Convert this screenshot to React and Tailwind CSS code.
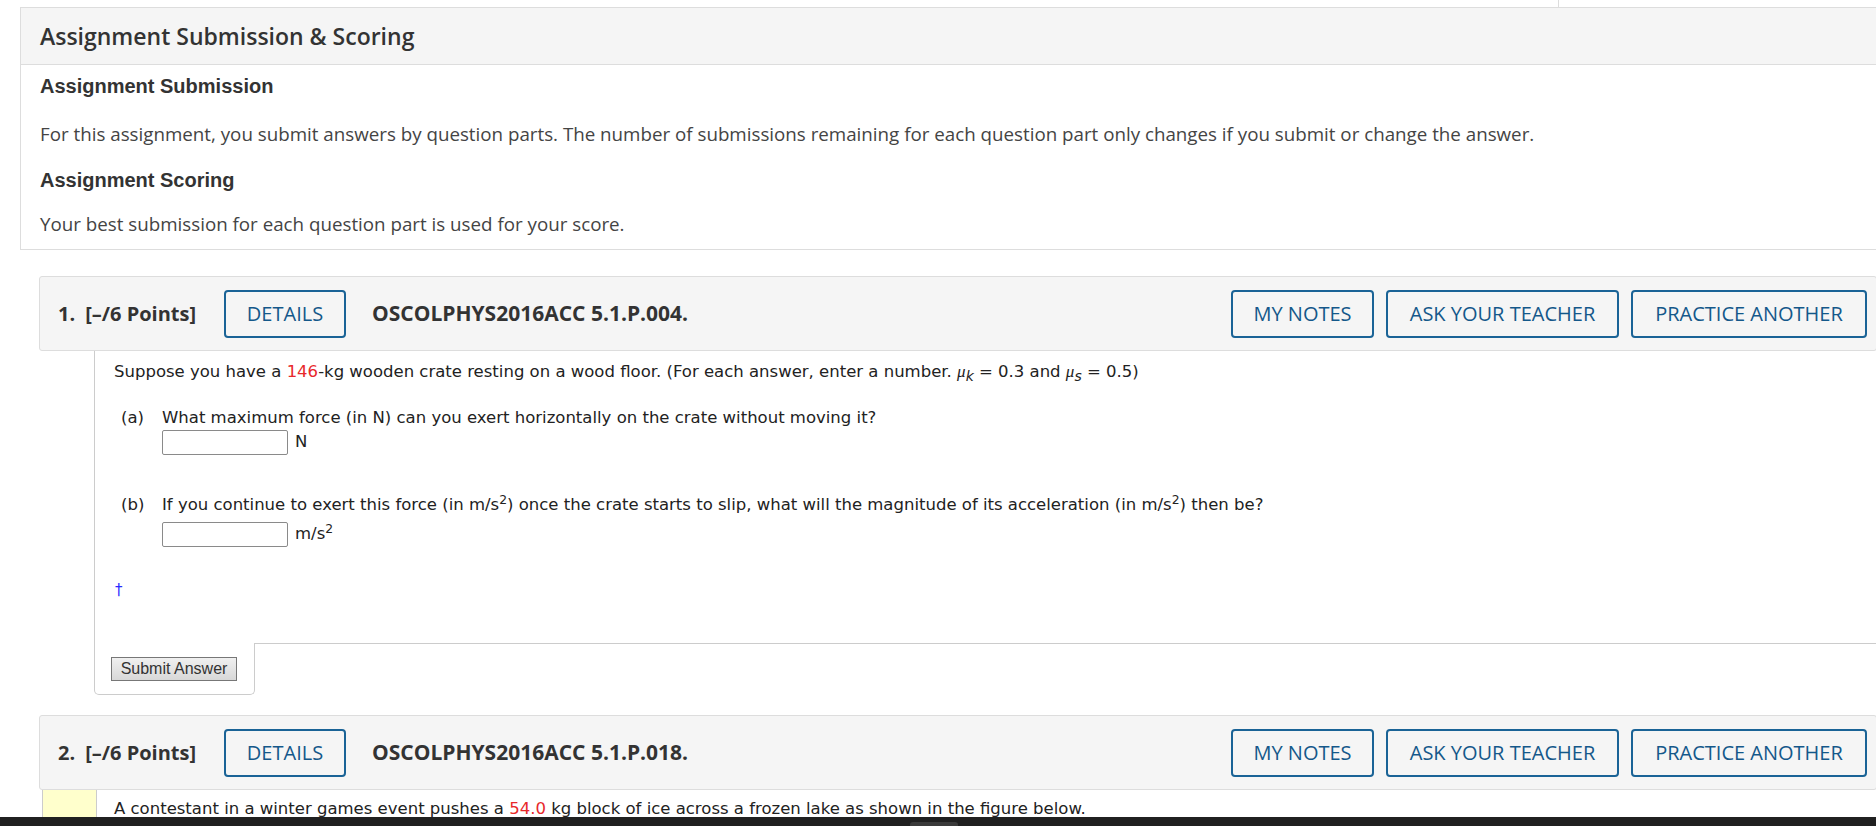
import React from "react";

const blueBtn =
  "h-[48px] flex items-center justify-center rounded-[4px] border-2 border-[#1a6396] text-[#14588a] text-[20px] uppercase bg-[#f5f5f5]";

function QuestionHeader({ num, code }) {
  return (
    <div className="ml-[39px] w-[1838px] h-[75px] border border-[#ddd] rounded-[3px] bg-[#f5f5f5] flex items-center pl-[18px] pr-[9px]">
      <span className="w-[166px] font-bold text-[20px] text-[#333] whitespace-nowrap">
        {num}.<span className="ml-[10px]">[–/6 Points]</span>
      </span>
      <button className={`${blueBtn} w-[122px]`}>Details</button>
      <span className="ml-[26px] font-bold text-[21px] text-[#333] whitespace-nowrap">{code}</span>
      <div className="flex-1" />
      <div className="flex gap-[12px]">
        <button className={`${blueBtn} w-[143px]`}>My Notes</button>
        <button className={`${blueBtn} w-[233px]`}>Ask Your Teacher</button>
        <button className={`${blueBtn} w-[236px]`}>Practice Another</button>
      </div>
    </div>
  );
}

function Mu({ sub }) {
  return (
    <span className="whitespace-nowrap">
      <i className="font-['Liberation_Serif',serif] text-[17px]">μ</i>
      <sub className="italic text-[14px]">{sub}</sub>
    </span>
  );
}

function AnswerBox({ unit }) {
  return (
    <div className="flex items-center pl-[67px]">
      <input
        type="text"
        className="w-[126px] h-[25px] border border-[#8a8a8a] rounded-[2px] bg-white"
      />
      <span className="ml-[7px]">{unit}</span>
    </div>
  );
}

export default function App() {
  return (
    <div className="h-[826px] w-[1876px] overflow-hidden bg-white flex flex-col font-['Open_Sans',sans-serif] text-[#333]">
      <div className="flex-1 overflow-hidden">
        {/* bottom edge of the panel above */}
        <div className="h-[7px] flex">
          <div className="w-[1559px] border-r border-[#ddd]" />
        </div>

        {/* Assignment Submission & Scoring */}
        <section className="ml-[20px] w-[1870px] border border-[#ddd]">
          <div className="h-[57px] bg-[#f5f5f5] border-b border-[#ddd] flex items-center pl-[19px]">
            <h1 className="text-[23px] font-semibold text-[#333]">Assignment Submission &amp; Scoring</h1>
          </div>
          <div className="h-[184px] pl-[19px] pt-[9px]">
            <h2 className="h-[24px] leading-[24px] font-['Liberation_Sans',sans-serif] font-bold text-[20px] text-[#333]">
              Assignment Submission
            </h2>
            <p className="mt-[22px] h-[28px] leading-[28px] text-[18.75px] text-[#444] whitespace-nowrap">
              For this assignment, you submit answers by question parts. The number of submissions remaining for each question part only changes if you submit or change the answer.
            </p>
            <h2 className="mt-[20px] h-[24px] leading-[24px] font-['Liberation_Sans',sans-serif] font-bold text-[20px] text-[#333]">
              Assignment Scoring
            </h2>
            <p className="mt-[18px] h-[28px] leading-[28px] text-[18.75px] text-[#444]">
              Your best submission for each question part is used for your score.
            </p>
          </div>
        </section>

        {/* Question 1 */}
        <div className="mt-[26px]">
          <QuestionHeader num="1" code="OSCOLPHYS2016ACC 5.1.P.004." />
          <div className="ml-[94px] font-['DejaVu_Sans',sans-serif] text-[16.5px] text-[#222]">
            <div className="h-[292px] border-l border-[#ccc] pt-[10px]">
              <p className="pl-[19px] leading-[22px] h-[22px] whitespace-nowrap">
                Suppose you have a <span className="text-[#e8282b]">146</span>-kg wooden crate resting on a wood floor. (For each answer, enter a number. <Mu sub="k" /> = 0.3 and <Mu sub="s" /> = 0.5)
              </p>
              <div className="mt-[24px] flex h-[22px] leading-[22px] pl-[26px]">
                <span className="w-[41px]">(a)</span>
                <span>What maximum force (in N) can you exert horizontally on the crate without moving it?</span>
              </div>
              <div className="mt-[1px]">
                <AnswerBox unit="N" />
              </div>
              <div className="mt-[39px] flex h-[22px] leading-[22px] pl-[26px]">
                <span className="w-[41px]">(b)</span>
                <span>
                  If you continue to exert this force (in m/s<sup>2</sup>) once the crate starts to slip, what will the magnitude of its acceleration (in m/s<sup>2</sup>) then be?
                </span>
              </div>
              <div className="mt-[6px]">
                <AnswerBox unit={<>m/s<sup>2</sup></>} />
              </div>
              <div className="mt-[32px] pl-[20px] h-[22px] leading-[22px] text-[15px] text-[#2a2aff]">†</div>
            </div>
            <div className="flex">
              <div className="w-[161px] h-[52px] border-l border-r border-b border-[#ccc] rounded-b-[5px] pl-[16px] pt-[14px]">
                <button className="w-[126px] h-[24px] border border-[#777] bg-gradient-to-b from-[#f0f0f0] to-[#d8d8d8] font-['Liberation_Sans',sans-serif] text-[16px] text-[#333] leading-none">
                  Submit Answer
                </button>
              </div>
              <div className="flex-1 border-t border-[#ccc]" />
            </div>
          </div>
        </div>

        {/* Question 2 */}
        <div className="mt-[20px]">
          <QuestionHeader num="2" code="OSCOLPHYS2016ACC 5.1.P.018." />
          <div className="flex h-[60px] font-['DejaVu_Sans',sans-serif] text-[16.5px] text-[#222]">
            <div className="ml-[42px] w-[55px] border-l border-r border-[#ccc] bg-[#ffffcc]" />
            <p className="pl-[17px] pt-[8px] leading-[22px] whitespace-nowrap">
              A contestant in a winter games event pushes a <span className="text-[#e8282b]">54.0</span> kg block of ice across a frozen lake as shown in the figure below.
            </p>
          </div>
        </div>
      </div>

      <div className="h-[9px] bg-[#202020] flex">
        <div className="ml-[910px] mt-[5px] w-[48px] h-[4px] rounded-t-[3px] bg-[#3a3a3a]" />
      </div>
    </div>
  );
}
